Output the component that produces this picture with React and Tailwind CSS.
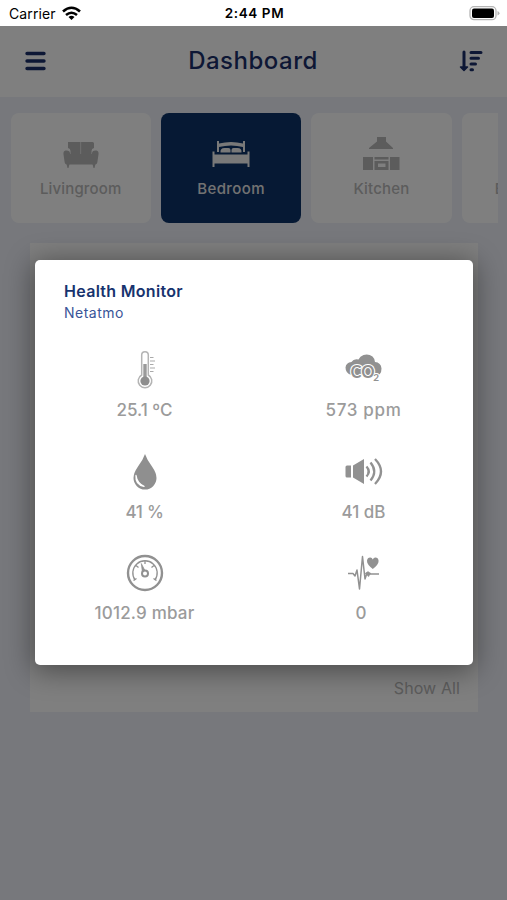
const rooms = [
  { name: 'Livingroom', icon: SofaIcon, track: 'tracking-[0.15px]' },
  { name: 'Bedroom', icon: BedIcon, track: 'tracking-[0.4px]', active: true },
  { name: 'Kitchen', icon: KitchenIcon, track: 'tracking-[0.2px]' },
];

const readings = [
  { value: '25.1 ºC', icon: ThermometerIcon, track: 'tracking-[0px]' },
  { value: '573 ppm', icon: Co2Icon, track: 'tracking-[0.7px]' },
  { value: '41 %', icon: DropIcon, track: 'tracking-[-0.6px] [word-spacing:1px]' },
  { value: '41 dB', icon: SpeakerIcon, track: 'tracking-[0px]' },
  { value: '1012.9 mbar', icon: GaugeIcon, track: 'tracking-[0.2px]' },
  { value: '0', icon: PulseIcon, track: 'pr-[5px]' },
];

function SofaIcon() {
  return (
    <svg width="40" height="40" viewBox="0 0 40 40" fill="currentColor">
      <path d="M7 7h12.500v12H9.500v-3q0-2.500-2.500-3z" />
      <path d="M20.100 7H31.500q1.500 0 1.500 1.500V13q-2.500.5-2.500 3v3H20.100z" />
      <path d="M4.500 15.500q4.500-.5 4.500 3V19h22v-.5q0-3.500 4.500-3 2.500.5 2 4l-1.200 8q-.3 2-2.300 2H6q-2 0-2.300-2L2.500 19.500q-.5-3.500 2-4z" />
      <path d="M5.500 29h3L7.500 33H6.500zM31.500 29h3l-1 4h-1z" />
    </svg>
  );
}

function BedIcon() {
  return (
    <svg width="40" height="40" viewBox="0 0 40 40" fill="currentColor">
      <path d="M6 6h2v2.500q12-3 24 0V6h2v11h-2v-5q-12-3-24 0v5H6z" />
      <path d="M9.500 17.500q-.5-4.500 4-4.500h4q2 0 2 2v2.500zM20.500 17.500V15q0-2 2-2h4q4.500 0 4 4.500z" />
      <path d="M1.500 16.500h2v3h33v-3h2V32h-2v-3.500h-33V32h-2z" />
    </svg>
  );
}

function KitchenIcon() {
  return (
    <svg width="40" height="40" viewBox="0 0 40 40" fill="currentColor">
      <path d="M16 2h9v4.500l7 6.500v1H8v-1l8-6.500z" />
      <path d="M2 22h10v13H2zM29 22h9.500v13H29zM13.500 22h14v2.500h-14z" />
      <path fillRule="evenodd" d="M13.500 26h14v9h-14zM17 28.500v3.500h7.500v-3.500z" />
    </svg>
  );
}

function ThermometerIcon() {
  return (
    <svg width="40" height="40" viewBox="0 0 40 40" fill="none">
      <path d="M16.700 25V5a3.300 3.300 0 0 1 6.600 0v20a6.800 6.800 0 1 1-6.600 0z" stroke="#b4b4b4" strokeWidth="1.500" />
      <path d="M20 14v15" stroke="#9a9a9a" strokeWidth="3.400" />
      <circle cx="20" cy="31" r="4.600" fill="#8e8e8e" />
      <path d="M25 7.500h3.500M25 11h5M25 14.500h3.500M25 18h5M25 21.500h3.500" stroke="#aaa" strokeWidth="1.200" />
    </svg>
  );
}

function Co2Icon() {
  return (
    <svg width="40" height="40" viewBox="0 0 40 40" fill="#919191">
      <path d="M7.500 25Q1.500 23.500 1.500 17.500 2 12.500 7.500 12 9.500 8.500 14.500 9.500q1.500-3.500 5-4.500 5-1.500 9 1.500 2.500 2.500 2.500 5.500 6 .5 6.500 6.500 0 7-6 7z" />
      {/* white halo first, then the label on top */}
      <g fill="#fff" stroke="#fff" strokeWidth="2.200" strokeLinejoin="round" className="font-['Lato',sans-serif] font-bold">
        <text x="6.500" y="27.500" fontSize="16.500">CO</text>
        <text x="29.300" y="31" fontSize="10">2</text>
      </g>
      <g className="font-['Lato',sans-serif] font-bold">
        <text x="6.500" y="27.500" fontSize="16.500">CO</text>
        <text x="29.300" y="31" fontSize="10">2</text>
      </g>
    </svg>
  );
}

function DropIcon() {
  return (
    <svg width="40" height="40" viewBox="0 0 40 40" fill="none">
      <path d="M20 2q2 6 7 12.500 4.500 6.500 4.500 11.500a11.500 11.500 0 0 1-23 0q0-5 4.500-11.500Q18 8 20 2z" fill="#8f8f8f" />
      <path d="M11 23.500q-.8 9 8 10.800-7-3.300-8-10.800z" fill="#fff" stroke="#fff" strokeWidth="1.300" strokeLinejoin="round" />
    </svg>
  );
}

function SpeakerIcon() {
  return (
    <svg width="40" height="40" viewBox="0 0 40 40" fill="#919191">
      <path d="M1.500 15q0-1.500 1.500-1.500h4v12H3q-1.500 0-1.500-1.500zM9 13.500 20 7v25L9 25.500z" />
      <g fill="none" stroke="#919191" strokeWidth="2.300">
        <path d="M22.500 14.500q4.500 5 0 10" />
        <path d="M26.500 10.500q7.500 9 0 18" />
        <path d="M31 7q12 12.500 0 25" />
      </g>
    </svg>
  );
}

function GaugeIcon() {
  return (
    <svg width="40" height="40" viewBox="0 0 40 40" fill="none" stroke="#919191">
      <circle cx="20" cy="20" r="17" strokeWidth="2.400" />
      <path d="M10.200 27.200A12.200 12.200 0 1 1 29.800 27.200" strokeWidth="1.300" />
      <path d="m8.500 27.500 3-2M31.500 27.500l-3-2M11 12.500l2.500 2M29 12.500l-2.500 2M20 8v3" strokeWidth="1.300" />
      <circle cx="20" cy="20.500" r="3" strokeWidth="2" />
      <path d="m16.300 10.500 1 8 2.500-1.200z" fill="#919191" strokeWidth=".7" />
    </svg>
  );
}

function PulseIcon() {
  return (
    <svg className="-ml-[5px]" width="40" height="40" viewBox="0 0 40 40" fill="none" stroke="#919191" strokeLinejoin="round">
      <path d="M7 20.500h5l2 2.500 2-6 2.500 19 3-32.500 2.500 22.500 2-6 1.500 3 1-2h9.500" strokeWidth="1.500" />
      <path d="m24 20.500 3-2 3 2-3 2z" fill="#919191" strokeWidth=".5" />
      <path d="M31.800 16q-6-4.500-5.800-8.200.5-3.300 3.300-3.200 1.700.2 2.500 2 .8-1.800 2.500-2 2.800-.1 3.300 3.200.2 3.700-5.800 8.200z" fill="#919191" stroke="none" />
    </svg>
  );
}

function StatusBar() {
  return (
    <div className="grid h-[26px] grid-cols-3 items-center bg-white pl-[9px] pr-[7px] text-black">
      <div className="flex items-center gap-1.5">
        <span className="text-[14px] tracking-[0.1px]">Carrier</span>
        <svg width="19" height="15" viewBox="0 0 19 15" fill="none" stroke="#000" strokeWidth="2.600">
          <path d="M1 5.500q8.500-7.500 17 0" />
          <path d="M4 9q5.500-4.500 11 0" />
          <path d="m9.500 14-3-3q3-2.400 6 0z" fill="#000" stroke="none" />
        </svg>
      </div>
      <span className="whitespace-nowrap text-center text-[13.500px] font-semibold tracking-[0.6px]">2:44 PM</span>
      <svg className="justify-self-end" width="31" height="15" viewBox="0 0 31 15">
        <rect x="1" y=".7" width="26" height="13" rx="4" fill="#fff" stroke="#b5b5b5" strokeWidth="1.300" />
        <rect x="3" y="2.500" width="22" height="9.400" rx="2" />
        <path d="M28.500 5q2 1 2 2.300t-2 2.300z" fill="#b5b5b5" />
      </svg>
    </div>
  );
}

function Header() {
  return (
    <header className="flex h-[71px] items-center justify-between bg-white pl-[25px] pr-6 pb-0.5 text-[#1b2f6b]">
      <svg width="22" height="20" viewBox="0 0 22 20" stroke="currentColor" strokeWidth="3.400" strokeLinecap="round">
        <path d="M2 2.500h17M2 10h17M2 17.500h17" />
      </svg>
      <h1 className="text-[24px] font-medium tracking-[0.5px]">Dashboard</h1>
      <svg width="24" height="22" viewBox="0 0 24 22" fill="none" stroke="currentColor" strokeLinecap="round">
        <path d="M5 2v16" strokeWidth="3" />
        <path d="M1.500 17h7L5 20.500z" fill="currentColor" strokeWidth="1.500" strokeLinejoin="round" />
        <path d="M12 2.500h10M12 8.300h7.500M12 14h4.500M12 19.700h1.500" strokeWidth="3" />
      </svg>
    </header>
  );
}

function RoomTabs() {
  return (
    <div className="ml-[10.500px] mr-[9px] flex gap-2.5 overflow-hidden">
      {rooms.map(({ name, icon: Icon, active, track }) => (
        <div
          key={name}
          className={`flex h-[110px] w-[140.400px] shrink-0 flex-col items-center rounded-lg pt-[22px] ${
            active ? 'bg-[#0c3268] text-[#f2f2f2]' : 'bg-white text-[#b8b8b8]'
          }`}
        >
          <Icon />
          <span className={`mt-[3px] text-[15px] font-medium leading-[22px] ${track} ${active ? 'text-[#e5e5e5]' : ''}`}>
            {name}
          </span>
        </div>
      ))}
      {/* Next tab, scrolled mostly out of view */}
      <div className="flex h-[110px] w-[140.400px] shrink-0 flex-col rounded-lg bg-white pl-[33px] pt-[65px] text-[15px] font-medium leading-[22px] text-[#b8b8b8]">
        Bathroom
      </div>
    </div>
  );
}

function HealthMonitor() {
  return (
    <section className="h-[405px] w-[438px] rounded-[5px] bg-white shadow-[0_4px_28px_2px_rgba(0,0,0,0.42)]">
      <div className="pl-[29px] pt-5">
        <h2 className="text-[16px] font-semibold leading-[22px] tracking-[0.3px] text-[#17336e]">Health Monitor</h2>
        <p className="text-[14px] leading-[21px] tracking-[0.5px] text-[#3a5598]">Netatmo</p>
      </div>
      <div className="mt-[27px] grid grid-cols-2">
        {readings.map(({ value, icon: Icon, track }) => (
          <div key={value} className="flex h-[101.500px] flex-col items-center">
            <Icon />
            <span className={`mt-2 text-[17px] font-medium leading-6 text-[#9b9b9b] ${track}`}>{value}</span>
          </div>
        ))}
      </div>
    </section>
  );
}

export default function App() {
  return (
    <div className="h-[900px] w-[507px] overflow-hidden bg-[#eef0f8] font-['Inter',sans-serif]">
      <StatusBar />
      <main className="relative h-[874px] overflow-hidden">
        <Header />
        <div className="mt-4">
          <RoomTabs />
        </div>
        <div className="ml-[30px] mt-5 flex h-[469px] w-[448px] items-end justify-end bg-white pb-3 pr-[18px]">
          <button className="text-[16px] leading-6 tracking-[0.1px] text-[#b8b8b8]">Show All</button>
        </div>

        {/* Modal backdrop */}
        <div className="absolute inset-0 flex items-start bg-black/50 pl-[35px] pt-[234px]">
          <HealthMonitor />
        </div>
      </main>
    </div>
  );
}
